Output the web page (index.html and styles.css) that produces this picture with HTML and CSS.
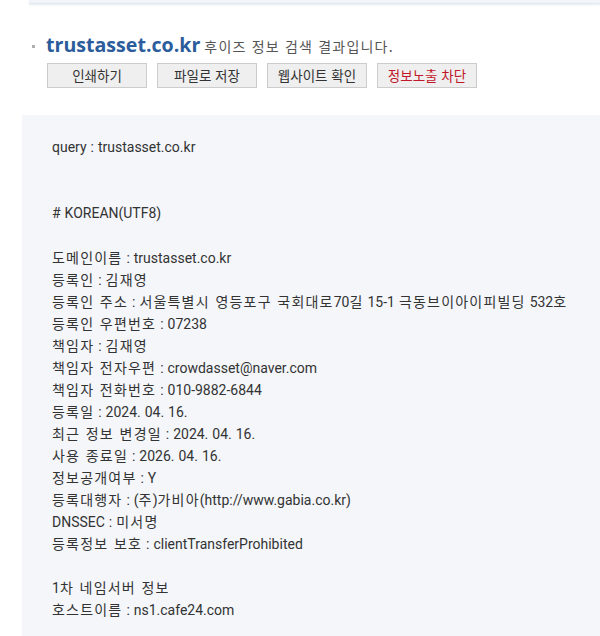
FILE: index.html
```html
<!DOCTYPE html>
<html lang="ko">
<head>
<meta charset="utf-8">
<title>후이즈 검색 결과</title>
<link rel="stylesheet" href="styles.css">
</head>
<body>
<div class="topbar"></div>
<div class="head">
  <div class="title-row">
    <span class="bullet"></span>
    <span class="domain">trustasset.co.kr</span>
    <span class="sub">후이즈 정보 검색 결과입니다.</span>
  </div>
  <div class="btns">
    <button class="btn">인쇄하기</button>
    <button class="btn">파일로 저장</button>
    <button class="btn">웹사이트 확인</button>
    <button class="btn red">정보노출 차단</button>
  </div>
</div>
<div class="result">
<div class="line">query : trustasset.co.kr</div>
<div class="line"></div>
<div class="line"></div>
<div class="line"># KOREAN(UTF8)</div>
<div class="line"></div>
<div class="line"><span class="k">도메인이름</span> : trustasset.co.kr</div>
<div class="line"><span class="k">등록인</span> : <span class="k">김재영</span></div>
<div class="line"><span class="k">등록인 주소</span> : <span class="k">서울특별시 영등포구 국회대로</span>70<span class="k">길</span> 15-1 <span class="k">극동브이아이피빌딩</span> 532<span class="k">호</span></div>
<div class="line"><span class="k">등록인 우편번호</span> : 07238</div>
<div class="line"><span class="k">책임자</span> : <span class="k">김재영</span></div>
<div class="line"><span class="k">책임자 전자우편</span> : crowdasset@naver.com</div>
<div class="line"><span class="k">책임자 전화번호</span> : 010-9882-6844</div>
<div class="line"><span class="k">등록일</span> : 2024. 04. 16.</div>
<div class="line"><span class="k">최근 정보 변경일</span> : 2024. 04. 16.</div>
<div class="line"><span class="k">사용 종료일</span> : 2026. 04. 16.</div>
<div class="line"><span class="k">정보공개여부</span> : Y</div>
<div class="line"><span class="k">등록대행자</span> : (<span class="k">주</span>)<span class="k">가비아</span>(http://www.gabia.co.kr)</div>
<div class="line">DNSSEC : <span class="k">미서명</span></div>
<div class="line"><span class="k">등록정보 보호</span> : clientTransferProhibited</div>
<div class="line"></div>
<div class="line">1<span class="k">차 네임서버 정보</span></div>
<div class="line"><span class="k">호스트이름</span> : ns1.cafe24.com</div>
<div class="line"></div>
</div>
</body>
</html>
```
FILE: styles.css
```css
html, body {
  margin: 0;
  padding: 0;
  background: #fff;
  font-family: Roboto, "Noto Sans CJK KR", sans-serif;
  color: #333;
  overflow: hidden;
}
.topbar {
  margin-left: 29px;
  height: 3px;
  background: #f1f4f8;
  border-bottom: 1px solid #e3e9f0;
  box-shadow: 0 1px 2px rgba(160, 180, 200, 0.25);
}
.head {
  padding: 28px 0 0 32px;
}
.title-row {
  display: flex;
  align-items: center;
  height: 24px;
}
.bullet {
  width: 3px;
  height: 3px;
  background: #b0b0b0;
  margin-right: 11px;
  margin-top: 4px;
}
.domain {
  font-family: "Open Sans", "Noto Sans", sans-serif;
  font-weight: 700;
  font-size: 19.6px;
  color: #2b5c9b;
}
.sub {
  font-family: "Noto Sans CJK KR", sans-serif;
  font-size: 14px;
  letter-spacing: 1.2px;
  color: #555;
  margin-left: 4px;
  margin-top: 3px;
}
.btns {
  display: flex;
  gap: 10px;
  margin: 7px 0 0 15px;
}
.btn {
  width: 100px;
  height: 25px;
  padding: 0;
  background: #efefef;
  border: 1px solid #cccccc;
  font-family: "Noto Sans CJK KR", sans-serif;
  font-size: 13.5px;
  color: #333;
  line-height: 23px;
}
.btn.red {
  color: #c0182a;
}
.result {
  margin: 27px 0 0 22px;
  background: #f4f6fa;
  padding: 21px 0 0 30px;
  font-size: 14px;
  word-spacing: 0.5px;
}
.line {
  height: 22px;
  line-height: 22px;
  white-space: nowrap;
}
.k {
  font-family: "Noto Sans CJK KR", sans-serif;
  letter-spacing: 1.2px;
}
```
